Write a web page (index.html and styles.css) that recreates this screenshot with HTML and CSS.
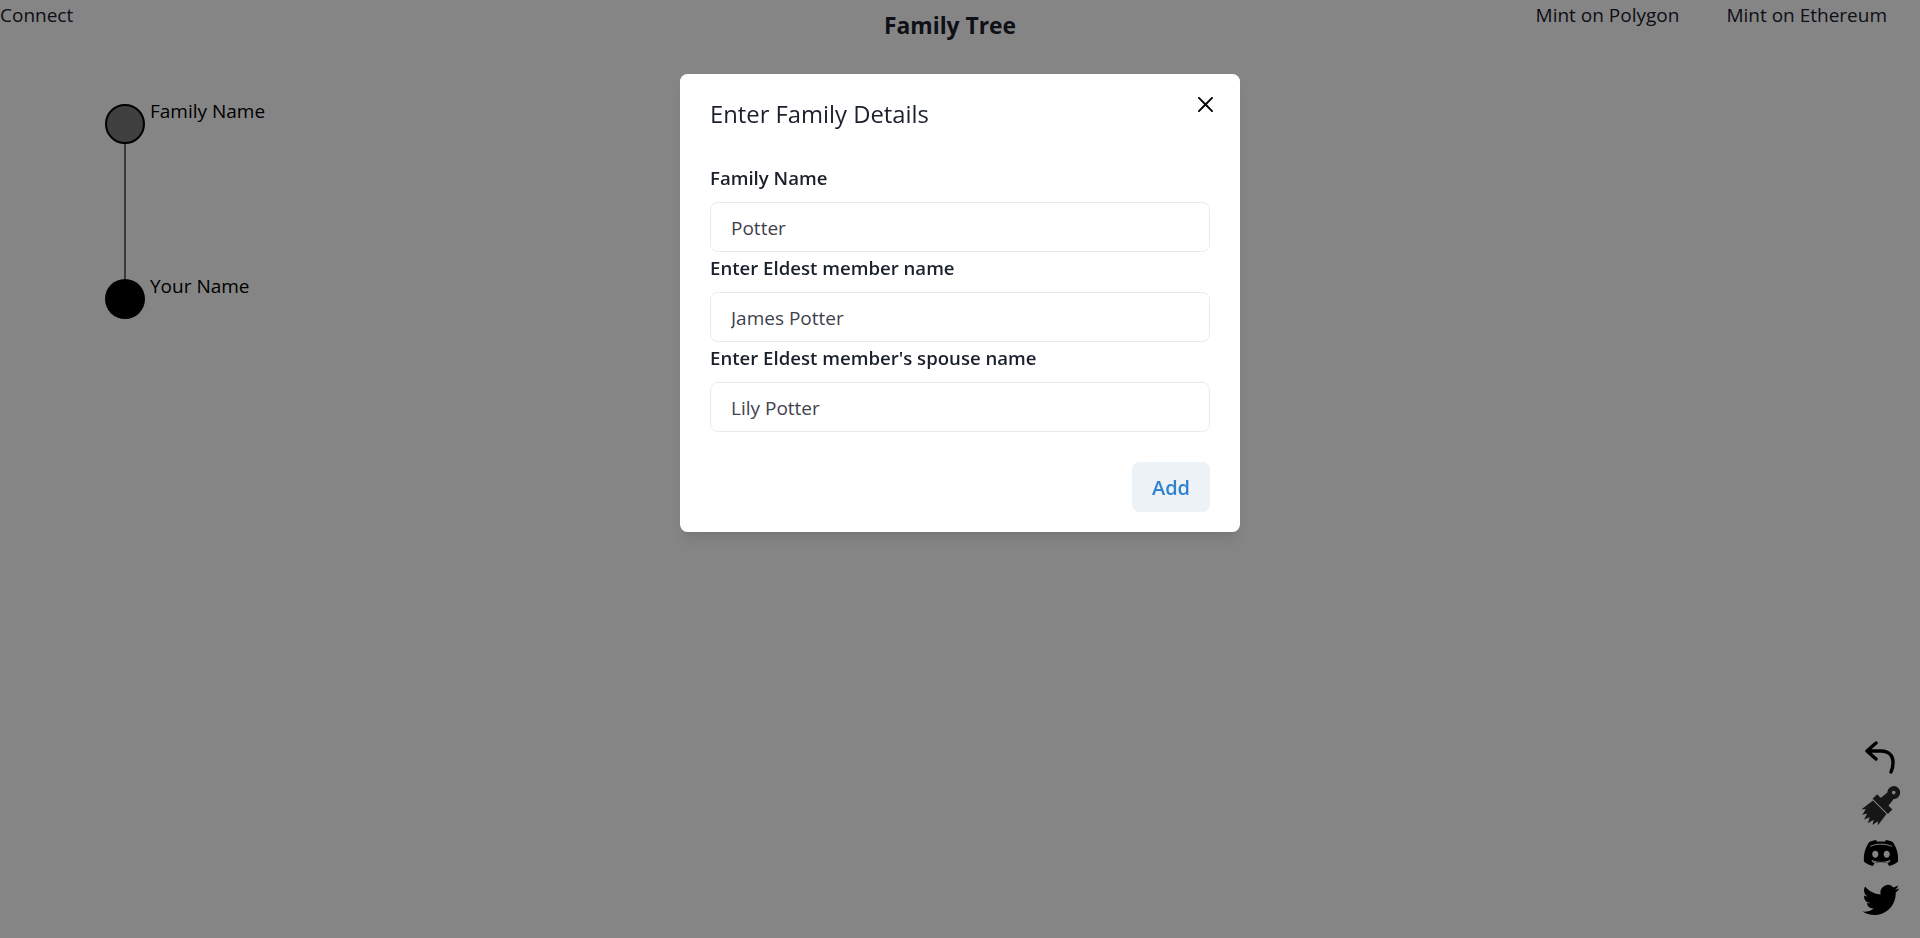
FILE: index.html
```html
<!DOCTYPE html>
<html lang="en">
<head>
  <meta charset="UTF-8" />
  <meta name="viewport" content="width=device-width, initial-scale=1.0"/>
  <title>Family Tree</title>
  <link rel="stylesheet" href="styles.css">
</head>
<body>

  <header class="top-bar">
    <a class="nav-link">Connect</a>
    <h1 class="page-title">Family Tree</h1>
    <nav class="mint-links">
      <a class="nav-link">Mint on Polygon</a>
      <a class="nav-link">Mint on Ethereum</a>
    </nav>
  </header>

  <!-- Tree canvas -->
  <svg class="tree" width="400" height="300" viewBox="0 50 400 300">
    <line class="tree-link" x1="125" y1="124" x2="125" y2="299"></line>
    <circle class="node node-family" cx="125" cy="124" r="19"></circle>
    <circle class="node node-member" cx="125" cy="299" r="20"></circle>
    <text class="node-label" x="150" y="118">Family Name</text>
    <text class="node-label" x="150" y="293">Your Name</text>
  </svg>

  <div class="side-tools">
    <svg class="tool-icon" viewBox="0 0 40 40">
      <path class="undo-path" d="M15 4 L6 12 L15 20 M6 12 H20 C28 12 32.500 17 32 24 C32 27 31 31 30 33"></path>
    </svg>
    <svg class="tool-icon brush-icon" viewBox="0 0 40 40">
      <g transform="rotate(45 20 20)">
        <path fill-rule="evenodd" d="M19.500 -5a6.500 6.500 0 0 1 4.500 11L25 15H14L15 6a6.500 6.500 0 0 1 4.500 -11zM19.500 -0.300a1.800 1.800 0 1 0 0 3.600a1.800 1.800 0 0 0 0-3.600z"></path>
        <path d="M9 14.500H30.500V20.800H9z"></path>
        <path d="M10.500 21.800H29.500L31.500 36L28.500 33L27.500 39.500L24.500 35L23 41.500L20 36L17.500 41.500L15.500 35L13 39.500L11.500 33L8.500 36z"></path>
      </g>
    </svg>
    <svg class="tool-icon" viewBox="-2 -2 28 28">
      <path d="M20.317 4.3698a19.7913 19.7913 0 00-4.8851-1.5152.0741.0741 0 00-.0785.0371c-.211.3753-.4447.8648-.6083 1.2495-1.8447-.2762-3.68-.2762-5.4868 0-.1636-.3933-.4058-.8742-.6177-1.2495a.077.077 0 00-.0785-.037 19.7363 19.7363 0 00-4.8852 1.515.0699.0699 0 00-.0321.0277C.5334 9.0458-.319 13.5799.0992 18.0578a.0824.0824 0 00.0312.0561c2.0528 1.5076 4.0413 2.4228 5.9929 3.0294a.0777.0777 0 00.0842-.0276c.4616-.6304.8731-1.2952 1.226-1.9942a.076.076 0 00-.0416-.1057c-.6528-.2476-1.2743-.5495-1.8722-.8923a.077.077 0 01-.0076-.1277c.1258-.0943.2517-.1923.3718-.2914a.0743.0743 0 01.0776-.0105c3.9278 1.7933 8.18 1.7933 12.0614 0a.0739.0739 0 01.0785.0095c.1202.099.246.1981.3728.2924a.077.077 0 01-.0066.1276 12.2986 12.2986 0 01-1.873.8914.0766.0766 0 00-.0407.1067c.3604.698.7719 1.3628 1.225 1.9932a.076.076 0 00.0842.0286c1.961-.6067 3.9495-1.5219 6.0023-3.0294a.077.077 0 00.0313-.0552c.5004-5.177-.8382-9.6739-3.5485-13.6604a.061.061 0 00-.0312-.0286zM8.02 15.3312c-1.1825 0-2.1569-1.0857-2.1569-2.419 0-1.3332.9555-2.4189 2.157-2.4189 1.2108 0 2.1757 1.0952 2.1568 2.419 0 1.3332-.9555 2.4189-2.1569 2.4189zm7.9748 0c-1.1825 0-2.1569-1.0857-2.1569-2.419 0-1.3332.9554-2.4189 2.1569-2.4189 1.2108 0 2.1757 1.0952 2.1568 2.419 0 1.3332-.946 2.4189-2.1568 2.4189Z"></path>
      <path class="discord-gap" d="M4.500 7.300C9 5.300 15 5.300 19.500 7.300M5.500 17.200C10 19 14 19 18.500 17.200"></path>
    </svg>
    <svg class="tool-icon" viewBox="-1 -1 26 26">
      <path d="M23.953 4.57a10 10 0 01-2.825.775 4.958 4.958 0 002.163-2.723c-.951.555-2.005.959-3.127 1.184a4.92 4.92 0 00-8.384 4.482C7.69 8.095 4.067 6.13 1.64 3.162a4.822 4.822 0 00-.666 2.475c0 1.71.87 3.213 2.188 4.096a4.904 4.904 0 01-2.228-.616v.06a4.923 4.923 0 003.946 4.827 4.996 4.996 0 01-2.212.085 4.936 4.936 0 004.604 3.417 9.867 9.867 0 01-6.102 2.105c-.39 0-.779-.023-1.17-.067a13.995 13.995 0 007.557 2.209c9.053 0 13.998-7.496 13.998-13.985 0-.21 0-.42-.015-.63A9.935 9.935 0 0024 4.59z"></path>
    </svg>
  </div>

  <!-- Family details modal -->
  <div class="modal-overlay">
    <section class="modal">
      <button class="close-btn" type="button" aria-label="Close">
        <svg viewBox="0 0 24 24"><path d="M.439,21.44a1.5,1.5,0,0,0,2.122,2.121L11.823,14.3a.25.25,0,0,1,.354,0l9.262,9.263a1.5,1.5,0,1,0,2.122-2.121L14.3,12.177a.25.25,0,0,1,0-.354l9.263-9.262A1.5,1.5,0,0,0,21.439.44L12.177,9.7a.25.25,0,0,1-.354,0L2.561.44A1.5,1.5,0,0,0,.439,2.561L9.7,11.823a.25.25,0,0,1,0,.354Z"></path></svg>
      </button>
      <h2 class="modal-title">Enter Family Details</h2>
      <form class="modal-body">
        <label class="field-label" for="family-name">Family Name</label>
        <input class="field-input" id="family-name" type="text" value="Potter" />
        <label class="field-label" for="eldest-name">Enter Eldest member name</label>
        <input class="field-input" id="eldest-name" type="text" value="James Potter" />
        <label class="field-label" for="spouse-name">Enter Eldest member's spouse name</label>
        <input class="field-input" id="spouse-name" type="text" value="Lily Potter" />
      </form>
      <div class="modal-footer">
        <button class="add-btn" type="button">Add</button>
      </div>
    </section>
  </div>

</body>
</html>
```

FILE: styles.css
```css
* {
  box-sizing: border-box;
}

body {
  margin: 0;
  height: 100vh;
  overflow: hidden;
  position: relative;
  background: #fff;
  color: #1a202c;
  font-family: "Open Sans", "Noto Sans", sans-serif;
  font-size: 19px;
  line-height: 30px;
}

.top-bar {
  display: grid;
  grid-template-columns: 1fr auto 1fr;
  align-items: start;
  height: 50px;
}

.nav-link {
  color: #1a202c;
}

.page-title {
  margin: 11px 20px 0 0;
  font-size: 22.800px;
  font-weight: 700;
  line-height: 30px;
}

.mint-links {
  display: flex;
  justify-content: flex-end;
  gap: 47px;
  padding-right: 33px;
}

.mint-links .nav-link {
  white-space: nowrap;
}

.tree {
  display: block;
}

.tree-link {
  stroke: #6f6f6f;
  stroke-width: 2;
}

.node {
  stroke: #000;
  stroke-width: 2;
}

.node-family {
  fill: #7b7b7b;
}

.node-member {
  fill: #000;
  stroke: none;
}

.node-label {
  fill: #000;
  font-size: 19px;
}

.side-tools {
  position: absolute;
  right: 19px;
  bottom: 18px;
  display: flex;
  flex-direction: column;
  gap: 7px;
}

.tool-icon {
  display: block;
  width: 40px;
  height: 40px;
  fill: #000;
}

.undo-path {
  fill: none;
  stroke: #000;
  stroke-width: 3.400;
  stroke-linecap: round;
  stroke-linejoin: round;
}

.brush-icon {
  fill: #2b2b2b;
  overflow: visible;
}

.discord-gap {
  fill: none;
  stroke: #fff;
  stroke-width: 0.7;
}

/* Dimmed backdrop */
.modal-overlay {
  position: fixed;
  top: 0;
  left: 0;
  width: 100%;
  height: 100%;
  display: flex;
  justify-content: center;
  align-items: flex-start;
  background: rgba(0, 0, 0, 0.48);
}

.modal {
  position: relative;
  width: 560px;
  margin-top: 74px;
  background: #fff;
  border-radius: 7.500px;
  box-shadow: 0 10px 15px -3px rgba(0, 0, 0, 0.1), 0 4px 6px -2px rgba(0, 0, 0, 0.05);
}

.modal-title {
  margin: 0;
  padding: 22px 30px 18px;
  font-size: 23.800px;
  font-weight: 400;
  line-height: 37.500px;
}

.close-btn {
  position: absolute;
  top: 10px;
  right: 15px;
  width: 40px;
  height: 40px;
  display: flex;
  align-items: center;
  justify-content: center;
  padding: 0;
  border: none;
  background: transparent;
}

.close-btn svg {
  width: 15px;
  height: 15px;
  fill: #000;
}

.modal-body {
  display: flex;
  flex-direction: column;
  padding: 10px 30px;
}

.field-label {
  margin-bottom: 10px;
  padding-top: 1px;
  height: 30px;
  font-size: 18.600px;
  font-weight: 600;
}

.field-input {
  width: 100%;
  height: 50px;
  padding: 2px 20px 0;
  border: 1px solid #e2e8f0;
  border-radius: 7.500px;
  background: #fff;
  color: #1a202c;
  font: inherit;
  opacity: 0.85;
}

.modal-footer {
  display: flex;
  justify-content: flex-end;
  padding: 20px 30px;
}

.add-btn {
  width: 78px;
  height: 50px;
  padding: 2px 0 0;
  border: none;
  border-radius: 7.500px;
  background: #edf2f7;
  color: #3182ce;
  font: inherit;
  font-size: 20px;
  font-weight: 600;
}
```
